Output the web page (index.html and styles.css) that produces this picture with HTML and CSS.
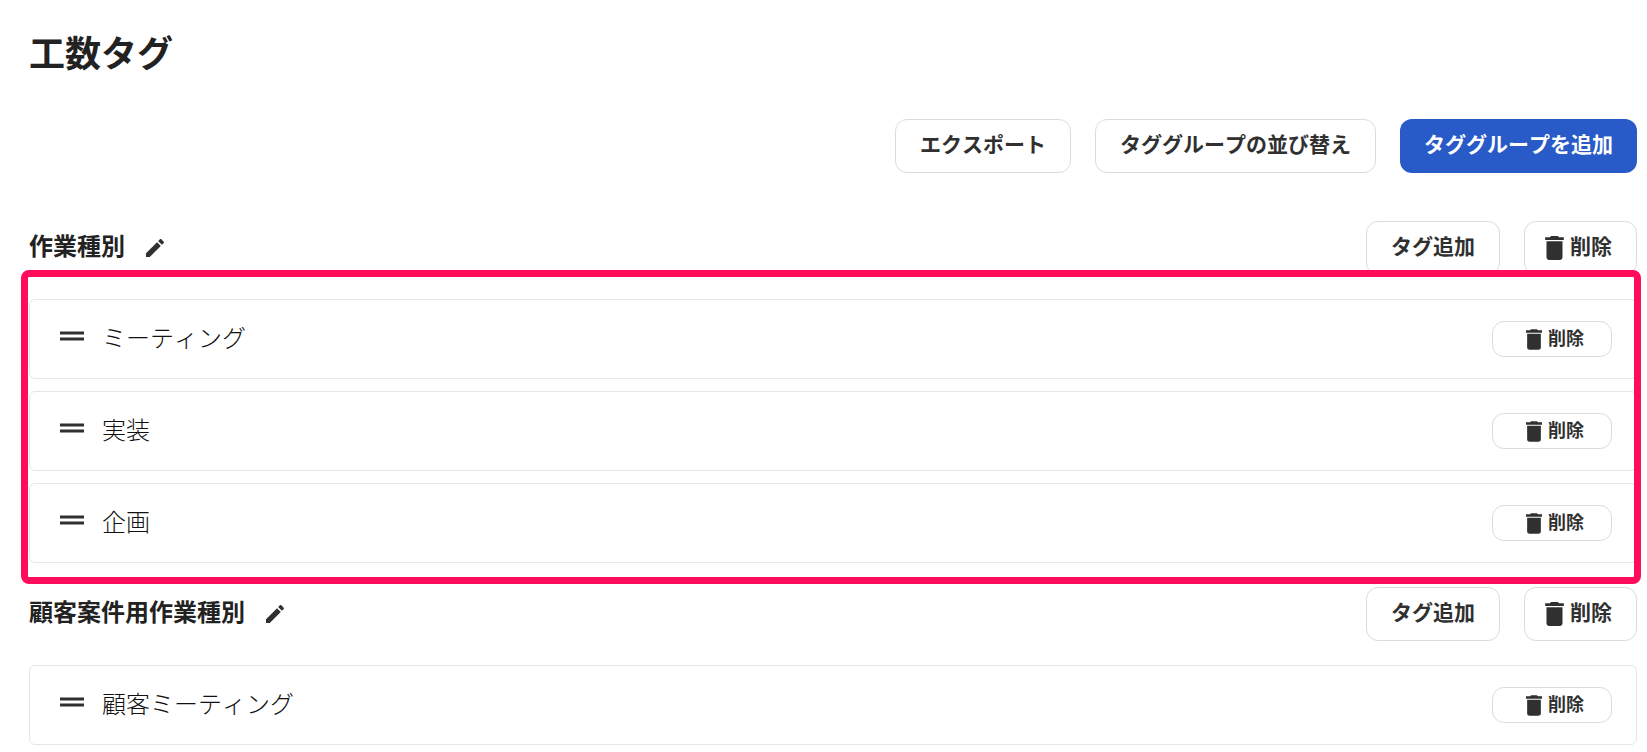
FILE: index.html
```
<!DOCTYPE html>
<html lang="ja">
<head>
<meta charset="utf-8">
<meta name="viewport" content="width=device-width, initial-scale=1">
<title>工数タグ</title>
<link rel="stylesheet" href="styles.css">
</head>
<body>
<svg class="sprite" aria-hidden="true">
  <symbol id="icon-trash" viewBox="5 3 14 18"><path d="M6 19c0 1.100.9 2 2 2h8c1.100 0 2-.9 2-2V7H6v12zM19 4h-3.500l-1-1h-5l-1 1H5v2h14V4z"/></symbol>
  <symbol id="icon-pencil" viewBox="0 0 24 24"><path d="M3 17.250V21h3.750L17.810 9.940l-3.750-3.750L3 17.250zM20.710 7.040c.39-.39.39-1.020 0-1.410l-2.340-2.340c-.39-.39-1.020-.39-1.410 0l-1.830 1.830 3.750 3.750 1.830-1.830z"/></symbol>
  <symbol id="icon-handle" viewBox="0 0 24 10"><path d="M0 .5h24v3H0zM0 6.500h24v3H0z"/></symbol>
</svg>
<main class="page">
  <h1 class="page-title">工数タグ</h1>
  <div class="toolbar">
    <button type="button" class="button">エクスポート</button>
    <button type="button" class="button">タググループの並び替え</button>
    <button type="button" class="button button-primary">タググループを追加</button>
  </div>

  <section class="group">
    <header class="group-header">
      <h2 class="group-title">作業種別</h2>
      <button type="button" class="icon-button" aria-label="名前を編集"><svg class="pencil"><use href="#icon-pencil"/></svg></button>
      <div class="group-actions">
        <button type="button" class="button">タグ追加</button>
        <button type="button" class="button button-delete"><svg class="trash"><use href="#icon-trash"/></svg>削除</button>
      </div>
    </header>
    <ul class="tag-list highlighted">
      <li class="tag"><svg class="handle"><use href="#icon-handle"/></svg><span class="tag-name">ミーティング</span><button type="button" class="button button-small"><svg class="trash-small"><use href="#icon-trash"/></svg>削除</button></li>
      <li class="tag"><svg class="handle"><use href="#icon-handle"/></svg><span class="tag-name">実装</span><button type="button" class="button button-small"><svg class="trash-small"><use href="#icon-trash"/></svg>削除</button></li>
      <li class="tag"><svg class="handle"><use href="#icon-handle"/></svg><span class="tag-name">企画</span><button type="button" class="button button-small"><svg class="trash-small"><use href="#icon-trash"/></svg>削除</button></li>
    </ul>
  </section>

  <section class="group">
    <header class="group-header">
      <h2 class="group-title">顧客案件用作業種別</h2>
      <button type="button" class="icon-button" aria-label="名前を編集"><svg class="pencil"><use href="#icon-pencil"/></svg></button>
      <div class="group-actions">
        <button type="button" class="button">タグ追加</button>
        <button type="button" class="button button-delete"><svg class="trash"><use href="#icon-trash"/></svg>削除</button>
      </div>
    </header>
    <ul class="tag-list">
      <li class="tag"><svg class="handle"><use href="#icon-handle"/></svg><span class="tag-name">顧客ミーティング</span><button type="button" class="button button-small"><svg class="trash-small"><use href="#icon-trash"/></svg>削除</button></li>
    </ul>
  </section>
</main>
</body>
</html>
```
FILE: styles.css
```
* {
  box-sizing: border-box;
}

body {
  margin: 0;
  background: #fff;
  color: #222;
  font-family: "Noto Sans CJK JP", sans-serif;
  font-kerning: none;
}

svg {
  display: block;
  flex: none;
  fill: #303030;
}

.sprite {
  position: absolute;
  width: 0;
  height: 0;
}

.page {
  padding: 27px 10px 6px 29px;
}

.page-title {
  margin: 0 0 44px;
  font-size: 36px;
  line-height: 48px;
}

.toolbar {
  display: flex;
  justify-content: flex-end;
  gap: 24px;
  margin-bottom: 48px;
}

.button {
  display: flex;
  align-items: center;
  justify-content: center;
  height: 54px;
  padding: 0 24px 6px;
  border: 1px solid #dcdcdc;
  border-radius: 12px;
  background: #fff;
  color: #303030;
  font-family: inherit;
  font-size: 21px;
  font-kerning: none;
  font-weight: 700;
  line-height: 30px;
  white-space: nowrap;
  cursor: pointer;
}

.button-primary {
  border: 0;
  background: #285ac8;
  color: #fff;
}

.button-delete {
  gap: 6px;
  padding-left: 20px;
}

.trash {
  width: 19px;
  height: 24px;
  margin-top: 6px;
}

.group {
  margin-bottom: 24px;
}

.group:last-child {
  margin-bottom: 0;
}

.group-header {
  display: flex;
  align-items: center;
  gap: 18px;
  margin-bottom: 24px;
}

.group-title {
  margin: 0;
  padding-bottom: 6px;
  font-size: 24px;
  line-height: 36px;
}

.icon-button {
  padding: 0;
  border: 0;
  background: none;
  cursor: pointer;
}

.pencil {
  width: 24px;
  height: 24px;
}

.group-actions {
  display: flex;
  gap: 24px;
  margin-left: auto;
}

.tag-list {
  position: relative;
  display: flex;
  flex-direction: column;
  gap: 12px;
  margin: 0;
  padding: 0;
  list-style: none;
}

/* Frame drawn over the list and the edge of its header */
.highlighted::after {
  content: "";
  position: absolute;
  inset: -29px -4px -21px -8px;
  border: 7px solid #ff0c5a;
  border-radius: 8px;
  pointer-events: none;
}

.tag {
  display: flex;
  align-items: center;
  height: 80px;
  padding: 0 24px 0 30px;
  border: 1px solid #e6e6e6;
  border-radius: 6px;
}

.handle {
  width: 24px;
  height: 10px;
  margin-bottom: 6px;
}

.tag-name {
  flex: 1;
  padding: 0 18px 4px;
  color: #111;
  font-size: 24px;
  font-weight: 300;
  line-height: 36px;
}

.button-small {
  gap: 6px;
  width: 120px;
  height: 36px;
  padding: 0 0 4px 6px;
  font-size: 18px;
}

.trash-small {
  width: 16px;
  height: 21px;
  margin-top: 5px;
}
```
